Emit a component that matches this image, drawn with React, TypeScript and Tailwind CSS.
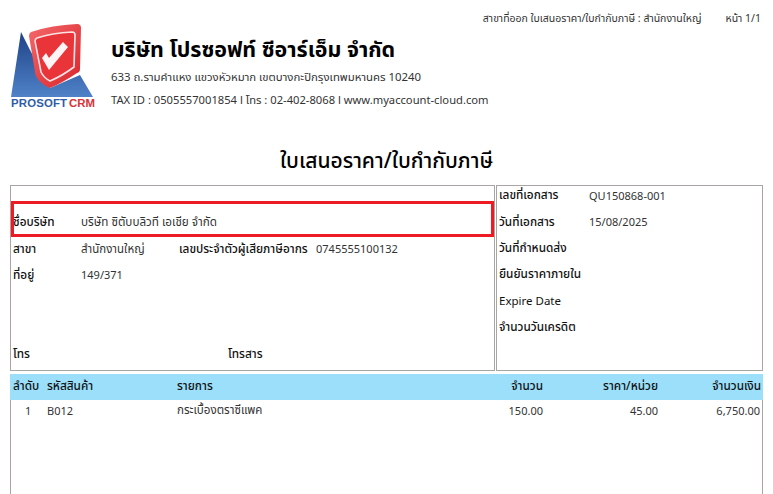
import React from 'react';

const Logo = () => (
  <div className="w-[88px] shrink-0">
    <svg width="88" height="86" viewBox="10 24 88 86">
      <defs>
        <linearGradient id="blue" x1="0" y1="0" x2="0" y2="1">
          <stop offset="0" stopColor="#1f4287" />
          <stop offset="1" stopColor="#4f82c8" />
        </linearGradient>
        <linearGradient id="red" x1="0" y1="0" x2="1" y2="1">
          <stop offset="0" stopColor="#f4686a" />
          <stop offset="1" stopColor="#d9252c" />
        </linearGradient>
      </defs>
      <path d="M21 32 L11 97 L93 97 L80 75 L50 88 L30 50 Z" fill="url(#blue)" />
      <path d="M31 32 Q52 25 77 24 Q81 24 81 28 L80 69 Q80 72 77 73 Q62 83 50 88 Q40 84 36 76 Q35 74 35 72 L29 36 Q29 33 31 32 Z" fill="url(#red)" />
      <path d="M37 38 Q52 33 72 32 Q75 32 75 35 L74 67 Q62 76 50 81 Q44 78 41 72 L35 41 Q35 39 37 38 Z" fill="#e9343a" stroke="#fbe3e3" strokeWidth="1.6" />
      <path d="M42 58 L46 53 L49 58 L63 42 L68 47 L49 70 Z" fill="#ffffff" fillOpacity="0.95" />
      <text x="11" y="107" fontSize="11.4" fontWeight="700" fill="#2f5ca8" fontFamily="'Liberation Sans', sans-serif" textLength="56">PROSOFT</text>
      <text x="69" y="107" fontSize="11.4" fontWeight="700" fill="#d8343a" fontFamily="'Liberation Sans', sans-serif" textLength="26">CRM</text>
    </svg>
  </div>
);

const Label = ({ className = '', children }: { className?: string; children: React.ReactNode }) => (
  <span className={`text-[11.8px] font-medium text-[#111] ${className}`}>{children}</span>
);

export default function App() {
  return (
    <div className="relative h-[494px] w-[773px] overflow-hidden bg-white px-[10px] text-[11px] leading-none text-[#333] [font-family:'Noto_Sans_Thai','Liberation_Sans','Noto_Sans',sans-serif]">
      {/* top line */}
      <div className="flex h-[24px] items-end justify-end gap-[24px] pr-[2px] text-[10.5px]">
        <span>สาขาที่ออก ใบเสนอราคา/ใบกำกับภาษี : สำนักงานใหญ่</span>
        <span>หน้า 1/1</span>
      </div>

      {/* company */}
      <div className="flex h-[86px]">
        <Logo />
        <div className="ml-[13px] pt-[15px]">
          <div className="text-[21.4px] font-bold leading-[24px] text-black">บริษัท โปรซอฟท์ ซีอาร์เอ็ม จำกัด</div>
          <div className="mt-[7px] text-[11.4px] leading-[16px]">633 ถ.รามคำแหง แขวงหัวหมาก เขตบางกะปิกรุงเทพมหานคร 10240</div>
          <div className="mt-[7px] text-[11.2px] leading-[16px]">TAX ID : 0505557001854 l โทร : 02-402-8068 l www.myaccount-cloud.com</div>
        </div>
      </div>

      <div className="flex h-[75px] items-center justify-center pt-[27px] text-[21px] font-medium text-black">
        ใบเสนอราคา/ใบกำกับภาษี
      </div>

      {/* info boxes */}
      <div className="flex h-[186px] gap-px">
        <div className="relative flex w-[485px] flex-col border border-[#aaa5a5] px-[2px] pb-[2px] pt-[24px]">
          <div className="flex h-[26.4px] items-center">
            <Label className="w-[68px] shrink-0">ชื่อบริษัท</Label>
            <span className="text-[11.7px]">บริษัท ซิตับบลิวที เอเชีย จำกัด</span>
          </div>
          <div className="flex h-[26.4px] items-center">
            <Label className="w-[68px] shrink-0">สาขา</Label>
            <span className="w-[98px] shrink-0 text-[11.5px]">สำนักงานใหญ่</span>
            <Label className="w-[137px] shrink-0">เลขประจำตัวผู้เสียภาษีอากร</Label>
            <span>0745555100132</span>
          </div>
          <div className="flex h-[26.4px] items-center">
            <Label className="w-[68px] shrink-0">ที่อยู่</Label>
            <span>149/371</span>
          </div>
          <div className="mt-auto flex h-[26px] items-center">
            <Label className="w-[215px] shrink-0">โทร</Label>
            <Label>โทรสาร</Label>
          </div>
          {/* red highlight */}
          <div className="absolute left-0 top-[15px] h-[36px] w-[483px] border-[3px] border-[#ed1c24]" />
        </div>
        <div className="flex flex-1 flex-col border border-[#aaa5a5] pl-[2px]">
          <div className="-mt-[3px] flex flex-col">
            <div className="flex h-[26.4px] items-center"><Label className="w-[90px] shrink-0">เลขที่เอกสาร</Label><span>QU150868-001</span></div>
            <div className="flex h-[26.4px] items-center"><Label className="w-[90px] shrink-0">วันที่เอกสาร</Label><span>15/08/2025</span></div>
            <div className="flex h-[26.4px] items-center"><Label>วันที่กำหนดส่ง</Label></div>
            <div className="flex h-[26.4px] items-center"><Label>ยืนยันราคาภายใน</Label></div>
            <div className="flex h-[26.4px] items-center text-[11.5px] text-[#111]">Expire Date</div>
            <div className="flex h-[26.4px] items-center"><Label>จำนวนวันเครดิต</Label></div>
          </div>
        </div>
      </div>

      {/* items table */}
      <div className="mt-[3px] h-[120px] border-x border-[#aaa5a5]">
        <div className="-mx-px flex h-[26px] items-center bg-[#9bdffb] text-[11.8px] font-medium text-[#111]">
          <span className="w-[36px] whitespace-nowrap pl-[3px]">ลำดับ</span>
          <span className="w-[131px] pl-[1px]">รหัสสินค้า</span>
          <span className="w-[300px]">รายการ</span>
          <span className="w-[66px] text-right">จำนวน</span>
          <span className="w-[115px] text-right">ราคา/หน่วย</span>
          <span className="w-[103px] text-right">จำนวนเงิน</span>
        </div>
        <div className="-mx-px flex h-[22px] items-center">
          <span className="w-[36px] pl-[15px]">1</span>
          <span className="w-[131px] pl-[1px]">B012</span>
          <span className="w-[300px] text-[11.6px]">กระเบื้องตราซีแพค</span>
          <span className="w-[66px] text-right">150.00</span>
          <span className="w-[115px] text-right">45.00</span>
          <span className="w-[102px] text-right">6,750.00</span>
        </div>
      </div>
    </div>
  );
}
